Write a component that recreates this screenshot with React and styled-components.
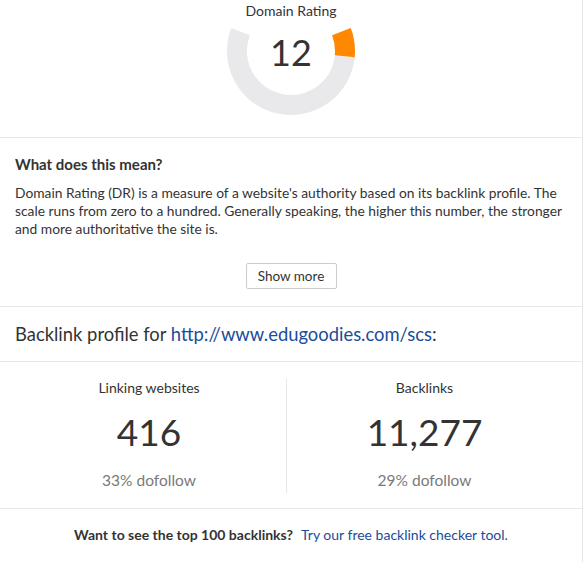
import styled, { createGlobalStyle } from 'styled-components';

const GlobalStyle = createGlobalStyle`
  html, body {
    margin: 0;
    padding: 0;
    background: #ffffff;
  }
  body {
    font-family: Lato, "Open Sans", Arial, sans-serif;
    color: #333333;
  }
`;

const Panel = styled.div`
  width: 583px;
  box-sizing: border-box;
  border-right: 1px solid #e6e6e6;
  border-bottom: 1px solid #fbf2dc;
  background: #ffffff;
`;

const Section = styled.section`
  border-bottom: ${(p) => (p.$last ? 'none' : '1px solid #e8e8e8')};
  padding: ${(p) => p.$pad || '0'};
  text-align: ${(p) => p.$align || 'left'};
`;

const GaugeLabel = styled.div`
  font-size: 14px;
  line-height: 20px;
  text-align: center;
  color: #333;
`;

const GaugeWrap = styled.div`
  position: relative;
  width: 130px;
  height: 90px;
  margin: 5px auto 0;
`;

const GaugeValue = styled.div`
  position: absolute;
  left: 0;
  right: 0;
  top: 6px;
  text-align: center;
  font-size: 36px;
  line-height: 40px;
  color: #333;
`;

const Heading = styled.h3`
  margin: 0 0 10px;
  font-size: 15px;
  line-height: 20px;
  font-weight: 700;
  color: #333;
`;

const Text = styled.p`
  margin: 0 -5px 0 0;
  font-size: 13.8px;
  line-height: 18px;
  color: #333;
`;

const ButtonRow = styled.div`
  display: flex;
  justify-content: center;
  margin-top: 25px;
`;

const Button = styled.button`
  width: 91px;
  height: 26px;
  padding: 0;
  border: 1px solid #cccccc;
  border-radius: 2px;
  background: #ffffff;
  font-family: Lato, Arial, sans-serif;
  font-size: 13.5px;
  color: #333;
`;

const Title = styled.h2`
  margin: 0;
  font-size: 18.4px;
  line-height: 24px;
  font-weight: 400;
  color: #333;
`;

const Link = styled.a`
  color: #1a4c9c;
  text-decoration: none;
`;

const Stats = styled.div`
  display: grid;
  grid-template-columns: 274px 276px;
  padding: 16px 0 15px 12px;
`;

const Stat = styled.div`
  text-align: center;
  border-left: ${(p) => (p.$divided ? '1px solid #e8e8e8' : 'none')};
  padding-bottom: 3px;
`;

const StatLabel = styled.div`
  font-size: 14px;
  line-height: 20px;
  color: #333;
`;

const StatValue = styled.div`
  margin-top: 12px;
  font-size: 37px;
  line-height: 44px;
  color: #333;
`;

const StatSub = styled.div`
  margin-top: 16px;
  font-size: 15.5px;
  line-height: 20px;
  color: #7a7a7a;
`;

const Promo = styled.div`
  font-size: 14px;
  line-height: 20px;
  color: #333;
  text-align: center;
  b {
    font-weight: 700;
    margin-right: 5px;
  }
`;

const Gauge = ({ value }) => {
  const cx = 65;
  const cy = 65;
  const r = 54;
  const start = 69;
  const sweep = 222;
  const pt = (deg) => {
    const a = (deg * Math.PI) / 180;
    return [cx + r * Math.sin(a), cy - r * Math.cos(a)];
  };
  const arc = (from, to) => {
    const [x1, y1] = pt(from);
    const [x2, y2] = pt(to);
    const large = to - from > 180 ? 1 : 0;
    return `M ${x1} ${y1} A ${r} ${r} 0 ${large} 1 ${x2} ${y2}`;
  };
  const mid = start + (sweep * value) / 100;
  return (
    <GaugeWrap>
      <svg width="130" height="90" viewBox="0 40 130 90">
        <path d={arc(mid, start + sweep)} fill="none" stroke="#e9e9eb" strokeWidth="20" />
        <path d={arc(start, mid)} fill="none" stroke="#ff8800" strokeWidth="20" />
      </svg>
      <GaugeValue>{value}</GaugeValue>
    </GaugeWrap>
  );
};

export default function App() {
  return (
    <>
      <GlobalStyle />
      <Panel>
        <Section $pad="1px 0 21px">
          <GaugeLabel>Domain Rating</GaugeLabel>
          <Gauge value={12} />
        </Section>
        <Section $pad="16px 15px 17px">
          <Heading>What does this mean?</Heading>
          <Text>
            Domain Rating (DR) is a measure of a website's authority based on its backlink profile. The
            scale runs from zero to a hundred. Generally speaking, the higher this number, the stronger
            and more authoritative the site is.
          </Text>
          <ButtonRow>
            <Button>Show more</Button>
          </ButtonRow>
        </Section>
        <Section $pad="15px 15px 15px">
          <Title>
            Backlink profile for <Link href="#">http://www.edugoodies.com/scs</Link>:
          </Title>
        </Section>
        <Section>
          <Stats>
            <Stat>
              <StatLabel>Linking websites</StatLabel>
              <StatValue>416</StatValue>
              <StatSub>33% dofollow</StatSub>
            </Stat>
            <Stat $divided>
              <StatLabel>Backlinks</StatLabel>
              <StatValue>11,277</StatValue>
              <StatSub>29% dofollow</StatSub>
            </Stat>
          </Stats>
        </Section>
        <Section $pad="16px 15px 17px" $last>
          <Promo>
            <b>Want to see the top 100 backlinks?</b> <Link href="#">Try our free backlink checker tool.</Link>
          </Promo>
        </Section>
      </Panel>
    </>
  );
}
